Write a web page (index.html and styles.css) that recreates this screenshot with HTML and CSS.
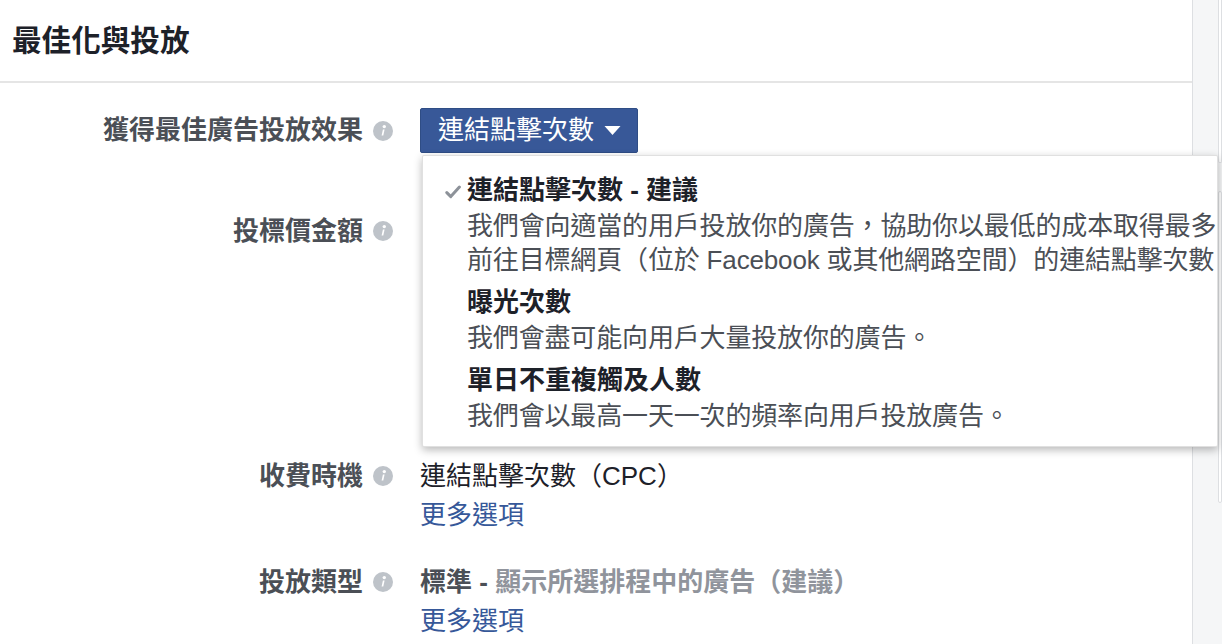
FILE: index.html
```html
<!DOCTYPE html>
<html lang="zh-Hant">
<head>
<meta charset="utf-8">
<title>最佳化與投放</title>
<link rel="stylesheet" href="styles.css">
</head>
<body>
<div class="page">
  <main class="panel">
    <header class="panel-head">
      <h1 class="title">最佳化與投放</h1>
    </header>
    <section class="form">
      <div class="row row-first">
        <div class="label"><span>獲得最佳廣告投放效果</span><svg class="info" viewBox="0 0 20 20"><circle cx="10" cy="10" r="10" fill="#bec3c9"/><circle cx="11.3" cy="5.6" r="1.7" fill="#fff"/><path d="M9.9 8.6 L11.6 8.6 L10.3 14.6 L8.6 14.6 Z" fill="#fff"/></svg></div>
        <div class="control">
          <div class="select">
            <button class="select-btn"><span>連結點擊次數</span><svg class="caret" viewBox="0 0 16 9"><path d="M0 0 H16 L8 9 Z" fill="#fff"/></svg></button>
            <div class="menu">
              <div class="item">
                <svg class="check" viewBox="0 0 16 14"><path d="M1.8 7.6 L5.8 11.6 L14.4 2" fill="none" stroke="#8d9299" stroke-width="3" stroke-linecap="round" stroke-linejoin="round"/></svg>
                <div class="item-title">連結點擊次數 - 建議</div>
                <div class="item-desc">我們會向適當的用戶投放你的廣告，協助你以最低的成本取得最多</div>
                <div class="item-desc">前往目標網頁（位於 Facebook 或其他網路空間）的連結點擊次數</div>
              </div>
              <div class="item">
                <div class="item-title">曝光次數</div>
                <div class="item-desc">我們會盡可能向用戶大量投放你的廣告。</div>
              </div>
              <div class="item">
                <div class="item-title">單日不重複觸及人數</div>
                <div class="item-desc">我們會以最高一天一次的頻率向用戶投放廣告。</div>
              </div>
            </div>
          </div>
        </div>
      </div>
      <div class="row row-bid">
        <div class="label label-top"><span>投標價金額</span><svg class="info" viewBox="0 0 20 20"><circle cx="10" cy="10" r="10" fill="#bec3c9"/><circle cx="11.3" cy="5.6" r="1.7" fill="#fff"/><path d="M9.9 8.6 L11.6 8.6 L10.3 14.6 L8.6 14.6 Z" fill="#fff"/></svg></div>
        <div class="control bid-space"></div>
      </div>
      <div class="row">
        <div class="label label-text"><span>收費時機</span><svg class="info" viewBox="0 0 20 20"><circle cx="10" cy="10" r="10" fill="#bec3c9"/><circle cx="11.3" cy="5.6" r="1.7" fill="#fff"/><path d="M9.9 8.6 L11.6 8.6 L10.3 14.6 L8.6 14.6 Z" fill="#fff"/></svg></div>
        <div class="control text-control">
          <div class="value">連結點擊次數（CPC）</div>
          <a class="more" href="#">更多選項</a>
        </div>
      </div>
      <div class="row">
        <div class="label label-text"><span>投放類型</span><svg class="info" viewBox="0 0 20 20"><circle cx="10" cy="10" r="10" fill="#bec3c9"/><circle cx="11.3" cy="5.6" r="1.7" fill="#fff"/><path d="M9.9 8.6 L11.6 8.6 L10.3 14.6 L8.6 14.6 Z" fill="#fff"/></svg></div>
        <div class="control text-control">
          <div class="value value-strong"><span class="dark">標準 -</span> <span class="light">顯示所選排程中的廣告（建議）</span></div>
          <a class="more" href="#">更多選項</a>
        </div>
      </div>
    </section>
  </main>
  <aside class="side">
    <div class="card card-one"></div>
    <div class="card card-two"></div>
  </aside>
</div>
</body>
</html>
```

FILE: styles.css
```css
* { box-sizing: border-box; }
html, body {
  margin: 0;
  padding: 0;
  height: 644px;
  overflow: hidden;
  background: #f5f6f7;
  font-family: "Liberation Sans", "Noto Sans CJK TC", sans-serif;
  font-size: 26px;
  color: #1d2129;
}
.page {
  display: flex;
  height: 644px;
}
.panel {
  width: 1193px;
  flex: none;
  background: #fff;
  border-right: 1px solid #dddfe2;
  position: relative;
}
.panel-head {
  height: 83px;
  border-bottom: 2px solid #e5e5e5;
  display: flex;
  align-items: center;
  padding-left: 12px;
}
.title {
  margin: 0;
  font-size: 29.6px;
  font-weight: bold;
  line-height: 40px;
  color: #1d2129;
}
.form {
  display: flex;
  flex-direction: column;
  gap: 28px;
  padding-top: 25px;
}
.row {
  display: grid;
  grid-template-columns: 393px 1fr;
  column-gap: 27px;
}
.row-bid { margin-top: 33px; }
.label {
  display: flex;
  justify-content: flex-end;
  align-items: center;
  gap: 10px;
  font-weight: bold;
  color: #4b4f56;
  line-height: 45px;
  white-space: nowrap;
}
.label-top { align-items: flex-start; line-height: 34px; }
.label-top .info { margin-top: 7px; }
.label-text { align-items: flex-start; line-height: 39px; }
.label-text .info { margin-top: 9px; }
.info { width: 20px; height: 20px; flex: none; }
.control { position: relative; }
.bid-space { height: 215px; }
.select { position: relative; display: inline-block; }
.select-btn {
  display: flex;
  align-items: center;
  gap: 10px;
  height: 45px;
  width: 218px;
  padding: 0 0 0 17px;
  border: 1px solid #2f4d85;
  border-radius: 2px;
  background: #385898;
  color: #fff;
  font: inherit;
  font-size: 26px;
  line-height: 45px;
  cursor: pointer;
}
.caret { width: 17px; height: 9px; }
.menu {
  position: absolute;
  left: 2px;
  top: 47px;
  width: 796px;
  background: #fff;
  border: 1px solid rgba(0, 0, 0, 0.12);
  border-radius: 2px;
  box-shadow: 0 3px 9px rgba(0, 0, 0, 0.28);
  padding: 12px 0 10px;
  overflow: hidden;
  z-index: 5;
}
.item {
  position: relative;
  padding: 3px 0 3px 44px;
  white-space: nowrap;
}
.check {
  position: absolute;
  left: 22px;
  top: 17px;
  width: 16px;
  height: 14px;
}
.item-title {
  font-weight: bold;
  color: #1d2129;
  line-height: 38px;
}
.item-desc {
  color: #4b4f56;
  line-height: 34px;
  letter-spacing: -0.16px;
}
.text-control { line-height: 39px; }
.value { color: #1d2129; }
.value-strong { font-weight: bold; }
.value-strong .dark { color: #4b4f56; }
.value-strong .light { color: #90949c; }
.more {
  display: inline-block;
  color: #365899;
  text-decoration: none;
}
.side {
  flex: 1;
  padding-left: 25px;
  background: #f5f6f7;
}
.card {
  background: #fff;
  border: 1px solid #dddfe2;
  border-radius: 4px;
}
.card-one {
  height: 163px;
  border-top: none;
  border-top-left-radius: 0;
  border-top-right-radius: 0;
}
.card-two {
  margin-top: 28px;
  height: 312px;
}
```
